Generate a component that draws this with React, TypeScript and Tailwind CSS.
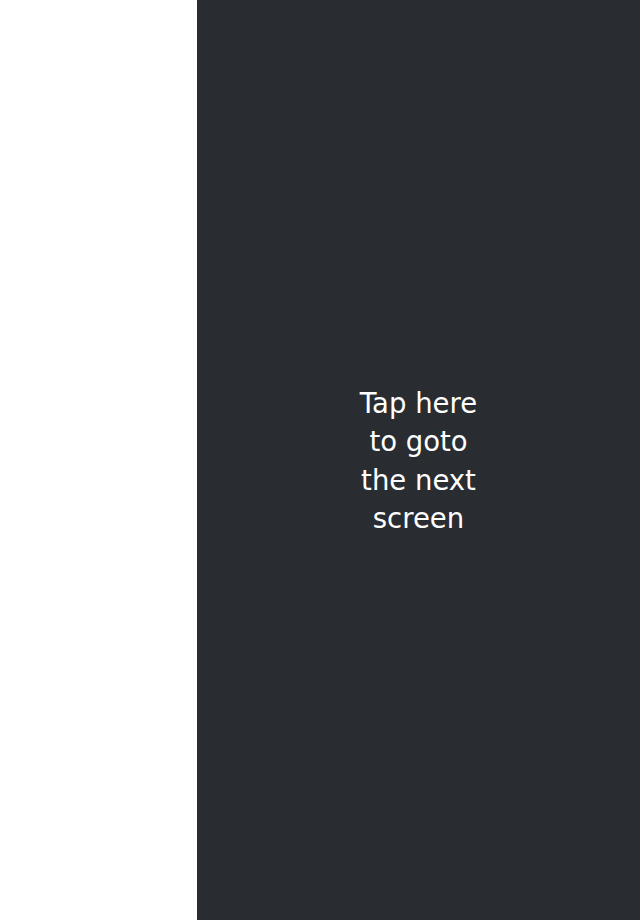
export default function App() {
  return (
    <div className="flex w-full h-[920px] bg-white">
      <div className="w-[197px] shrink-0 bg-white" />
      <button
        type="button"
        className="flex flex-1 items-center justify-center bg-[#292d31] cursor-pointer pt-[1px]"
      >
        <span
          className="w-[128px] text-center text-white text-[27.5px] leading-[38.5px]"
          style={{ fontFamily: '"DejaVu Sans", sans-serif' }}
        >
          Tap here to goto the next screen
        </span>
      </button>
    </div>
  );
}
